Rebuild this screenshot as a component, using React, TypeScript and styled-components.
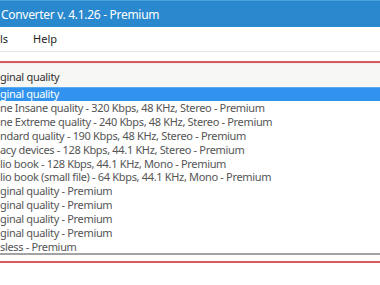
import React from "react";
import styled, { createGlobalStyle } from "styled-components";

const Global = createGlobalStyle`
  html, body { margin: 0; padding: 0; background: #ffffff; }
  body { width: 380px; height: 285px; overflow: hidden; font-family: "Noto Sans", "Open Sans", sans-serif; }
`;

const Window = styled.div`
  width: 380px;
  height: 285px;
  display: flex;
  flex-direction: column;
  background: #ffffff;
  overflow: hidden;
`;

const TitleBar = styled.div`
  height: 27px;
  flex: none;
  background: #2a89ce;
  border-top: 1px solid #4aa3e0;
  box-sizing: border-box;
  display: flex;
  align-items: center;
  color: #ffffff;
  font-size: 12px;
  letter-spacing: -0.3px;
  padding-left: 1px;
  white-space: nowrap;
`;

const MenuBar = styled.div`
  height: 25px;
  flex: none;
  box-sizing: border-box;
  border-bottom: 1px solid #e4e4e4;
  display: flex;
  align-items: center;
  gap: 25px;
  font-size: 11px;
  color: #1e1e1e;
  padding-bottom: 1px;
`;

const MenuItem = styled.span`
  white-space: nowrap;
`;

const Frame = styled.div`
  margin-top: 9px;
  flex: none;
  border-top: 2px solid #d95a5a;
  border-bottom: 2px solid #d95a5a;
  display: flex;
  flex-direction: column;
`;

const Combo = styled.div`
  height: 24px;
  box-sizing: border-box;
  border-top: 1px solid #ededed;
  background: #f7f7f5;
  display: flex;
  align-items: center;
  font-size: 11px;
  letter-spacing: -0.3px;
  color: #333333;
  padding-top: 1px;
  white-space: nowrap;
`;

const List = styled.div`
  display: flex;
  flex-direction: column;
  background: #ffffff;
  border-bottom: 2px solid #a3a3a3;
  margin-bottom: 6px;
`;

const Row = styled.div<{ $selected?: boolean }>`
  height: 13.85px;
  display: flex;
  align-items: center;
  font-size: 11px;
  letter-spacing: -0.33px;
  white-space: nowrap;
  color: ${(p) => (p.$selected ? "#ffffff" : "#555555")};
  background: ${(p) => (p.$selected ? "#3193ee" : "transparent")};
  box-shadow: ${(p) => (p.$selected ? "inset 0 1px 0 #5aaaf0" : "none")};
`;

const rows = [
  "ginal quality",
  "ne Insane quality - 320 Kbps, 48 KHz, Stereo - Premium",
  "ne Extreme quality - 240 Kbps, 48 KHz, Stereo - Premium",
  "ndard quality - 190 Kbps, 48 KHz, Stereo - Premium",
  "acy devices - 128 Kbps, 44.1 KHz, Stereo - Premium",
  "lio book - 128 Kbps, 44.1 KHz, Mono - Premium",
  "lio book (small file) - 64 Kbps, 44.1 KHz, Mono - Premium",
  "ginal quality - Premium",
  "ginal quality - Premium",
  "ginal quality - Premium",
  "ginal quality - Premium",
  "sless - Premium",
];

export default function App() {
  return (
    <Window>
      <Global />
      <TitleBar>Converter v. 4.1.26 - Premium</TitleBar>
      <MenuBar>
        <MenuItem>ls</MenuItem>
        <MenuItem>Help</MenuItem>
      </MenuBar>
      <Frame>
        <Combo>ginal quality</Combo>
        <List>
          {rows.map((r, i) => (
            <Row key={i} $selected={i === 0}>
              {r}
            </Row>
          ))}
        </List>
      </Frame>
    </Window>
  );
}
